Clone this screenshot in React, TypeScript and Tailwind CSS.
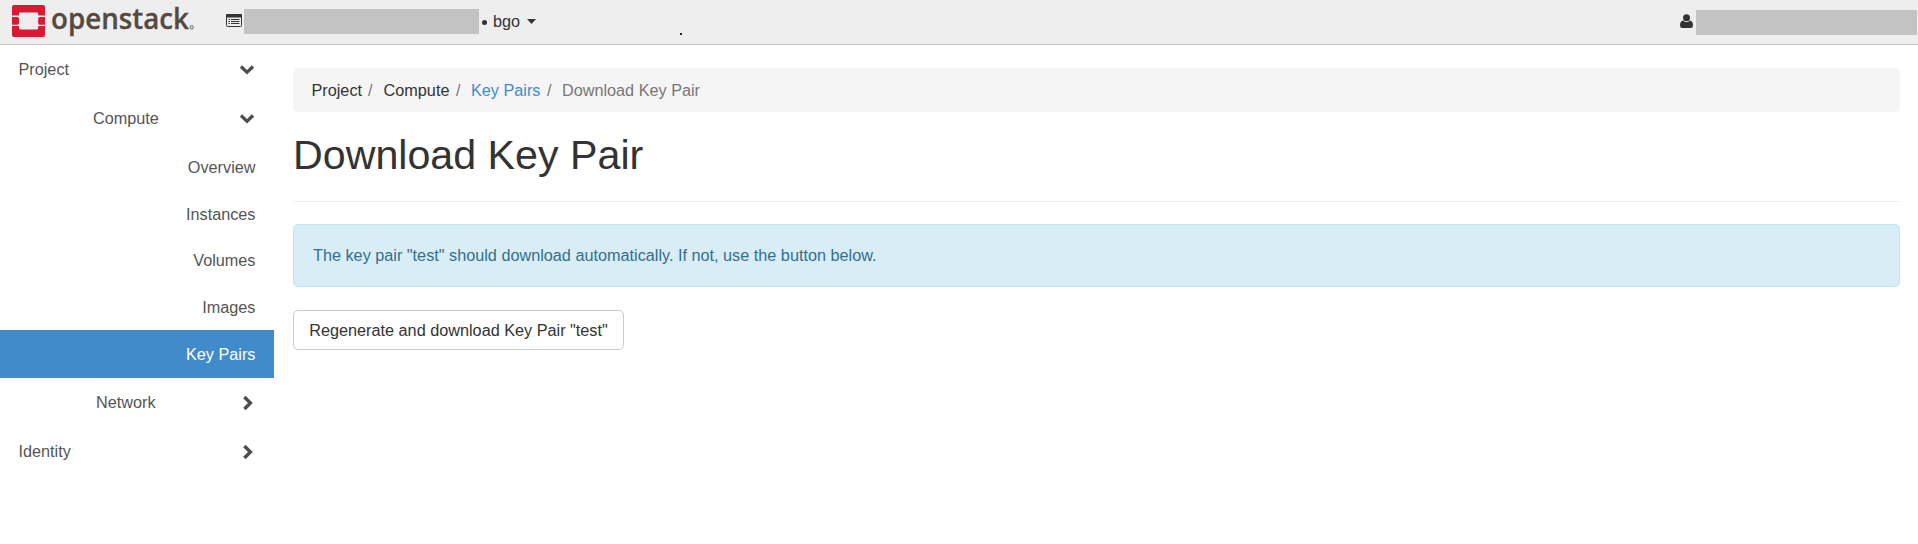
import React from "react";

const items = ["Overview", "Instances", "Volumes", "Images", "Key Pairs"];

function ChevronDown() {
  return (
    <svg viewBox="0 0 16 12" className="mr-[0.500px] h-3 w-4" fill="#4d4d4d">
      <path d="M3.2 1.3 8 6 12.8 1.3 15.2 3.7 8 10.6 0.8 3.7Z" />
    </svg>
  );
}

function ChevronRight() {
  return (
    <svg viewBox="0 0 12 16" className="mr-[1px] h-4 w-3" fill="#4d4d4d">
      <path d="M3.6 0.8 10.8 8 3.6 15.2 1.2 12.8 6 8 1.2 3.2Z" />
    </svg>
  );
}

function Logo() {
  return (
    <div className="flex h-11 w-[226px] items-start">
      <svg viewBox="0 0 33 32" className="mt-[5px] ml-3 h-8 w-[33px]" fill="#da1a32">
        <path d="M2 0H31Q33 0 33 2V10.400H26.200V9Q26.200 7.600 24.800 7.600H8.400Q7 7.600 7 9V10.400H0V2Q0 0 2 0Z" />
        <path d="M0 21H7V23Q7 24.400 8.400 24.400H24.800Q26.200 24.400 26.200 23V21H33V30Q33 32 31 32H2Q0 32 0 30Z" />
        <path d="M0 12H5.400Q7 12 7 13.500V18.500Q7 19.700 5.400 19.700H0ZM33 12H27.800Q26.200 12 26.200 13.500V18.500Q26.200 19.700 27.800 19.700H33Z" />
      </svg>
      <svg viewBox="0 0 145 44" className="ml-[6px] h-11 w-[145px] overflow-visible" fill="#544a41">
        <text x="0" y="29" fontFamily="Open Sans" fontWeight="600" fontSize="28.5" stroke="#544a41" strokeWidth="0.3" textLength="138" lengthAdjust="spacingAndGlyphs">openstack</text>
        <circle cx="140.700" cy="27.300" r="1.600" fill="none" stroke="#544a41" strokeWidth="0.900" />
      </svg>
    </div>
  );
}

export default function App() {
  return (
    <div className="h-[544px] bg-white font-['Liberation_Sans',Arial,sans-serif] text-[16.24px] leading-[23px] text-[#333]">
      <header className="flex h-[45px] items-start border-b border-[#c8c8c8] bg-[#eee]">
        <Logo />
        <svg viewBox="0 0 16 13" className="mt-[14px] h-[13px] w-4">
          <rect x="0.500" y="0.500" width="15" height="12" rx="1" fill="#eee" stroke="#333" />
          <path d="M0 1Q0 0 1 0H15Q16 0 16 1V3.500H0Z" fill="#333" />
          <path d="M2.500 5.500H4M2.500 7.500H4M2.500 9.500H4M5 5.500H13.500M5 7.500H13.500M5 9.500H13.500" stroke="#333" />
        </svg>
        <div className="mt-[9px] ml-[2px] h-[25px] w-[235px] bg-[#c3c3c3]" />
        <div className="mt-[20px] ml-[3px] h-[5px] w-[5px] rounded-full bg-[#333]" />
        <span className="mt-[10px] ml-[6px] w-[27px]">bgo</span>
        <svg viewBox="0 0 9 5" className="mt-[19px] ml-[7px] h-[5px] w-[9px]" fill="#333">
          <path d="M0 0H9L4.500 5Z" />
        </svg>
        <div className="mt-[33px] ml-[144px] h-[2px] w-[2px] bg-[#222]" />
        <div className="ml-auto flex items-start">
          <svg viewBox="0 0 13 14" className="mt-[14px] mr-[3px] h-[14px] w-[13px]" fill="#333">
            <circle cx="6.500" cy="3.700" r="3.500" />
            <path d="M3.200 6.500Q4.500 8.200 6.500 8.200T9.800 6.500Q13 7 13 11.500Q13 14 10.800 14H2.200Q0 14 0 11.500Q0 7 3.200 6.500Z" />
          </svg>
          <div className="mt-[10px] mr-[1px] h-[25px] w-[221px] bg-[#c3c3c3]" />
        </div>
      </header>
      <div className="flex">
        <nav className="w-[274px] text-[#555]">
          <div className="flex h-[49px] items-center justify-between pr-[19px] pl-[18.500px]">Project<ChevronDown /></div>
          <div className="flex h-[49px] items-center justify-between pr-[19px] pl-[93px]">Compute<ChevronDown /></div>
          {items.map((t) => (
            <div
              key={t}
              className={
                t === "Key Pairs"
                  ? "flex h-[48px] items-center justify-end bg-[#428bca] pr-[18.500px] text-white"
                  : "flex h-[46.75px] items-center justify-end pt-[2px] pr-[18.500px]"
              }
            >
              {t}
            </div>
          ))}
          <div className="flex h-[49px] items-center justify-between pr-[19px] pl-[96px]">Network<ChevronRight /></div>
          <div className="flex h-[49px] items-center justify-between pr-[19px] pl-[18.500px]">Identity<ChevronRight /></div>
        </nav>
        <main className="ml-[19px] flex w-[1607px] flex-col items-start pt-[23px]">
          <div className="flex h-[44px] w-full items-center rounded-[5px] bg-[#f5f5f5] pl-[18.500px]">
            <span>Project</span>
            <span className="mr-[11px] ml-[6px] text-[#777]">/</span>
            <span>Compute</span>
            <span className="mr-[10.500px] ml-[6.500px] text-[#777]">/</span>
            <a className="text-[#428bca]">Key Pairs</a>
            <span className="mr-[10.500px] ml-[6.500px] text-[#777]">/</span>
            <span className="text-[#777]">Download Key Pair</span>
          </div>
          <h1 className="flex h-[90px] w-full border-b border-[#eee] pt-[20px] text-[41.2px] leading-[46px]">Download Key Pair</h1>
          <div className="mt-[22px] flex h-[63px] w-full items-center rounded-[5px] border border-[#bce8f1] bg-[#d9edf7] pl-[19px] text-[#31708f]">
            The key pair "test" should download automatically. If not, use the button below.
          </div>
          <button className="mt-[23px] h-[40px] w-[331px] rounded-[5px] border border-[#ccc] bg-white whitespace-nowrap">
            Regenerate and download Key Pair "test"
          </button>
        </main>
      </div>
    </div>
  );
}
